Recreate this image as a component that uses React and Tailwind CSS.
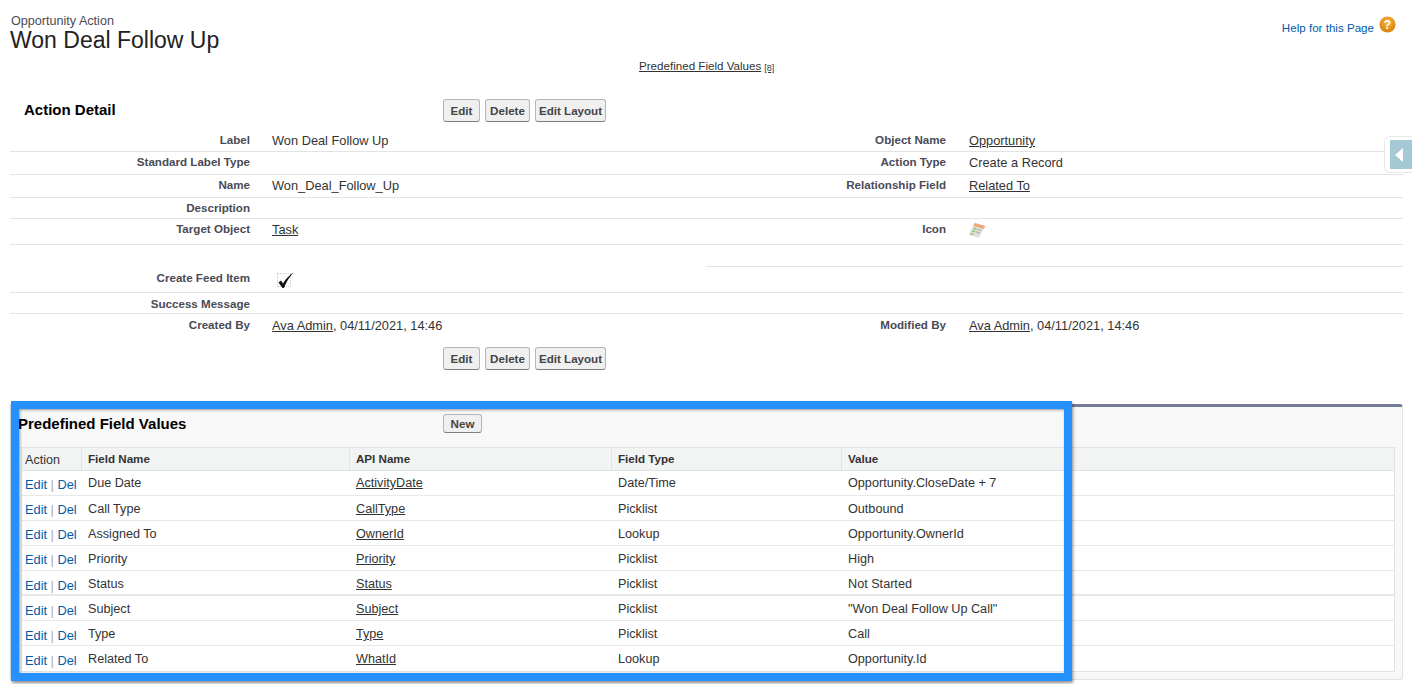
const rowsTop = [
  { h: "h-[24px] pt-[2px]", l: "Label", v: "Won Deal Follow Up", l2: "Object Name", v2: "Opportunity", link2: true },
  { h: "h-[23px]", l: "Standard Label Type", v: "", l2: "Action Type", v2: "Create a Record" },
  { h: "h-[23px]", l: "Name", v: "Won_Deal_Follow_Up", l2: "Relationship Field", v2: "Related To", link2: true },
  { h: "h-[21px]", l: "Description", v: "", l2: "", v2: "" },
];
const fields = [
  ["Due Date", "ActivityDate", "Date/Time", "Opportunity.CloseDate + 7"],
  ["Call Type", "CallType", "Picklist", "Outbound"],
  ["Assigned To", "OwnerId", "Lookup", "Opportunity.OwnerId"],
  ["Priority", "Priority", "Picklist", "High"],
  ["Status", "Status", "Picklist", "Not Started"],
  ["Subject", "Subject", "Picklist", "\"Won Deal Follow Up Call\""],
  ["Type", "Type", "Picklist", "Call"],
  ["Related To", "WhatId", "Lookup", "Opportunity.Id"],
];

function Btn({ children, w }) {
  return (
    <button className={`h-[23px] ${w} rounded-[3px] border border-[#b5b5b5] border-b-[#7f7f7f] bg-[#f0f0f0] text-[11.6px] font-bold text-[#444] leading-none`}>
      {children}
    </button>
  );
}

function Buttons() {
  return (
    <div className="flex gap-[5px]">
      <Btn w="w-[37px]">Edit</Btn>
      <Btn w="w-[45px]">Delete</Btn>
      <Btn w="w-[71px]">Edit Layout</Btn>
    </div>
  );
}

function Lbl({ children, top }) {
  return <div className={`w-[262px] shrink-0 pr-[22px] ${top ? "pt-[1px]" : "pt-[2px]"} text-right text-[11.6px] leading-[18px] font-bold text-[#4a4a56]`}>{children}</div>;
}

function Val({ children, link, w = "" }) {
  return <div className={`${w} pt-[1px] text-[12.8px] leading-[20px] text-[#333] ${link ? "underline" : ""}`}>{children}</div>;
}

function TaskIcon() {
  return (
    <svg width="18" height="18" viewBox="0 0 18 18">
      <g transform="rotate(16 9 9) skewX(-12)">
        <rect x="5" y="2" width="11" height="13" fill="#dfe0d8" />
        <rect x="5" y="2" width="11" height="3" fill="#f2a371" />
        <rect x="6.5" y="6.5" width="3" height="1.5" fill="#8cc383" />
        <rect x="10.5" y="6.5" width="4" height="1.5" fill="#b4bab4" />
        <rect x="6.5" y="9.5" width="3" height="1.5" fill="#8cc383" />
        <rect x="10.5" y="9.5" width="4" height="1.5" fill="#b4bab4" />
        <rect x="6.5" y="12.5" width="3" height="1.5" fill="#8cc383" />
      </g>
    </svg>
  );
}

export default function App() {
  return (
    <div className="relative h-[684px] w-[1412px] overflow-hidden bg-white font-['Liberation_Sans',Arial,sans-serif] text-[#333]">
      <div className="flex h-[57px] justify-between pl-[11px] pr-[16px] pt-[14px]">
        <div>
          <div className="text-[12.6px] leading-[14px] text-[#4a4a56]">Opportunity Action</div>
          <div className="-ml-[1px] text-[23px] leading-[25px] text-[#222]">Won Deal Follow Up</div>
        </div>
        <div className="flex items-start gap-[5px] pt-[2px]">
          <span className="pt-[3px] text-[11.6px] text-[#015ba7]">Help for this Page</span>
          <svg width="17" height="17" viewBox="0 0 17 17">
            <defs>
              <radialGradient id="h" cx="50%" cy="35%" r="65%">
                <stop offset="0%" stopColor="#f8b73c" />
                <stop offset="100%" stopColor="#d77f0a" />
              </radialGradient>
            </defs>
            <circle cx="8.5" cy="8.5" r="8" fill="url(#h)" />
            <text x="8.5" y="13" textAnchor="middle" fontSize="12" fontWeight="700" fill="#fff" fontFamily="Liberation Sans">?</text>
          </svg>
        </div>
      </div>

      <div className="pl-[639px] pt-[1px] text-[11.6px] leading-[16px] text-[#333]">
        <span className="underline">Predefined Field Values</span>
        <span className="ml-[3px] align-[-1px] text-[9px] underline">[8]</span>
      </div>

      <div className="mx-[10px] mt-[9px] w-[1393px]">
        <div className="flex h-[43px] items-start pt-[14px]">
          <div className="w-[433px] pl-[14px] text-[15px] leading-[22px] font-bold text-black">Action Detail</div>
          <Buttons />
        </div>

        {rowsTop.map((r) => (
          <div key={r.l} className={`flex border-b border-[#e3e3e3] ${r.h}`}>
            <Lbl top>{r.l}</Lbl>
            <Val w="w-[434px]">{r.v}</Val>
            <Lbl top>{r.l2}</Lbl>
            <div className="pl-[1px]"><Val link={r.link2}>{r.v2}</Val></div>
          </div>
        ))}

        <div className="flex h-[26px] border-b border-[#e3e3e3]">
          <Lbl top>Target Object</Lbl>
          <Val w="w-[434px]" link>Task</Val>
          <Lbl top>Icon</Lbl>
          <div className="pt-[3px]"><TaskIcon /></div>
        </div>

        <div className="flex h-[48px] border-b border-[#e3e3e3]">
          <div className="flex w-[696px] shrink-0 items-start pt-[22px]">
            <Lbl>Create Feed Item</Lbl>
            <div className="ml-[5px] mt-[6px] h-[14px] w-[14px] border border-dotted border-[#ccc]">
              <svg className="overflow-visible" width="14" height="14" viewBox="0 0 14 14">
                <path d="M0.5 8.5 L3 6.5 L5 9.5 C7.5 5 11 1.5 15.5 -1.5 C11 3.5 8 8.5 6 14 L4.5 14 Z" fill="#111" />
              </svg>
            </div>
          </div>
          <div className="h-[22px] flex-1 border-b border-[#e3e3e3]" />
        </div>

        <div className="flex h-[21px] border-b border-[#e3e3e3]"><Lbl>Success Message</Lbl></div>
        <div className="flex h-[24px]">
          <Lbl>Created By</Lbl>
          <div className="w-[434px] pt-[1px]"><Val><span className="underline">Ava Admin</span>, 04/11/2021, 14:46</Val></div>
          <Lbl>Modified By</Lbl>
          <div className="pl-[1px] pt-[1px]"><Val><span className="underline">Ava Admin</span>, 04/11/2021, 14:46</Val></div>
        </div>
        <div className="flex h-[33px] items-end pb-[1px] pl-[433px]"><Buttons /></div>
      </div>

      <div className="ml-[10px] mt-[33px] h-[276px] w-[1393px] rounded-[3px] border border-[#e0e3e5] border-t-[3px] border-t-[#747e96] bg-[#f8f8f8] pl-[10px] pr-[7px]">
        <div className="flex h-[40px] items-start pt-[7px]">
          <div className="-ml-[3px] w-[425px] text-[15px] leading-[20px] font-bold text-black">Predefined Field Values</div>
          <button className="h-[19px] w-[39px] rounded-[3px] border border-[#b5b5b5] border-b-[#7f7f7f] bg-[#f0f0f0] text-[11.6px] font-bold text-[#444] leading-none">New</button>
        </div>
        <div className="border border-[#e0e3e5] bg-white">
          <div className="flex h-[23px] border-b border-[#e0e3e5] bg-[#f2f3f3] text-[11.6px] leading-[18px] font-bold">
            <div className="w-[60px] border-r border-[#e0e3e5] pl-[3px] pt-[3px] text-[12.6px] font-normal">Action</div>
            <div className="w-[268px] border-r border-[#e0e3e5] pl-[6px] pt-[2px]">Field Name</div>
            <div className="w-[262px] border-r border-[#e0e3e5] pl-[6px] pt-[2px]">API Name</div>
            <div className="w-[230px] border-r border-[#e0e3e5] pl-[6px] pt-[2px]">Field Type</div>
            <div className="pl-[6px] pt-[2px]">Value</div>
          </div>
          {fields.map((f, i) => (
            <div key={f[0]} className={`flex h-[25px] text-[12.65px] leading-[19px] ${i < 7 ? (i === 4 ? "border-b-2 border-[#e8e8e8]" : "border-b border-[#e8e8e8]") : ""}`}>
              <div className={`w-[60px] pl-[3px] text-[12.8px] ${i < 4 ? "pt-[4px]" : "pt-[5px]"}`}>
                <span className="text-[#015ba7]">Edit</span>
                <span className="text-[#aaa]"> | </span>
                <span className="text-[#015ba7]">Del</span>
              </div>
              <div className={`w-[268px] pl-[6px] ${i === 0 ? "pt-[3px]" : "pt-[4px]"}`}>{f[0]}</div>
              <div className={`w-[262px] pl-[6px] underline ${i === 0 ? "pt-[3px]" : "pt-[4px]"}`}>{f[1]}</div>
              <div className={`w-[230px] pl-[6px] ${i === 0 ? "pt-[3px]" : "pt-[4px]"}`}>{f[2]}</div>
              <div className={`pl-[6px] ${i === 0 ? "pt-[3px]" : "pt-[4px]"}`}>{f[3]}</div>
            </div>
          ))}
        </div>
      </div>

      <div className="absolute right-0 top-[136px] h-[37px] w-[28px] rounded-l-[6px] border border-r-0 border-[#e8e8e8] bg-white pl-[5px] pt-[3px]">
        <div className="flex h-[29px] items-center bg-[#a5c8d5] pl-[5px]">
          <div className="h-0 w-0 border-y-[7px] border-r-[8px] border-y-transparent border-r-white" />
        </div>
      </div>

      <div className="absolute left-[11px] top-[401px] h-[280px] w-[1061px] border-[8px] border-[#2491ff] shadow-[1px_2px_3px_rgba(0,0,0,0.45),inset_1px_1px_3px_rgba(0,0,0,0.4)]" />
    </div>
  );
}
